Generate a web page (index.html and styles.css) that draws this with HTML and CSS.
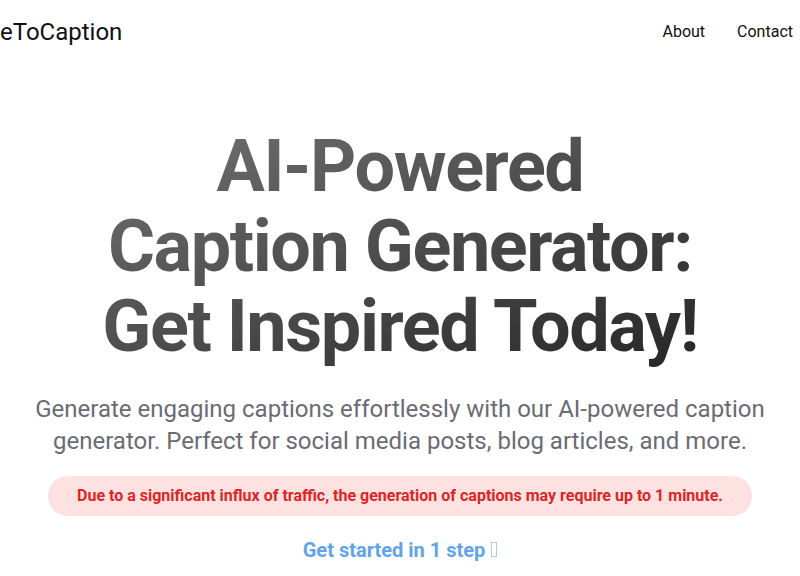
FILE: index.html
```html
<!DOCTYPE html>
<html lang="en">
<head>
    <meta charset="UTF-8">
    <meta name="viewport" content="width=device-width, initial-scale=1.0">
    <title>ImageToCaption - AI-Powered Caption Generator</title>
    <link rel="stylesheet" href="styles.css">
</head>
<body>
    <header class="topbar">
        <a class="logo" href="#">eToCaption</a>
        <nav class="nav">
            <a href="#">About</a>
            <a href="#">Contact</a>
        </nav>
    </header>
    <main class="hero">
        <h1 class="title">AI-Powered<br>Caption Generator:<br>Get Inspired Today!</h1>
        <p class="lead">Generate engaging captions effortlessly with our AI-powered caption generator. Perfect for social media posts, blog articles, and more.</p>
        <div class="notice">Due to a significant influx of traffic, the generation of captions may require up to 1 minute.</div>
        <a class="start" href="#">Get started in 1 step <span class="glyph" aria-hidden="true"></span></a>
    </main>
</body>
</html>
```

FILE: styles.css
```css
body {
    font-family: Roboto, "Liberation Sans", sans-serif;
    background-color: #ffffff;
    color: #111;
    margin: 0;
    padding: 0;
    overflow: hidden;
}
a {
    text-decoration: none;
    color: inherit;
}
.topbar {
    display: flex;
    justify-content: space-between;
    align-items: center;
    height: 63px;
    padding: 0 7px 0 0;
}
.logo {
    font-size: 24px;
    color: #111;
}
.nav {
    display: flex;
    gap: 32px;
    font-size: 16px;
}
.hero {
    display: flex;
    flex-direction: column;
    align-items: center;
    text-align: center;
    padding: 0 32px;
}
.title {
    margin: 64px 0 0;
    font-size: 72px;
    line-height: 80px;
    font-weight: 700;
    letter-spacing: -1.44px;
    background: linear-gradient(to bottom right, #737373, #262626);
    -webkit-background-clip: text;
    background-clip: text;
    color: transparent;
}
.lead {
    margin: 26px 0 0;
    font-size: 24px;
    line-height: 32px;
    color: #6b6b73;
}
.notice {
    margin-top: 19px;
    width: 704px;
    box-sizing: border-box;
    padding: 10px 16px;
    border-radius: 20px;
    background-color: #fee2e2;
    color: #dc2626;
    font-size: 16px;
    line-height: 20px;
    font-weight: 700;
}
.start {
    margin-top: 20px;
    font-size: 20px;
    line-height: 28px;
    font-weight: 700;
    color: #62a4ec;
}
.glyph {
    display: inline-block;
    width: 4px;
    height: 13px;
    margin-left: 1px;
    border: 1px solid #a9cbf5;
}
```
